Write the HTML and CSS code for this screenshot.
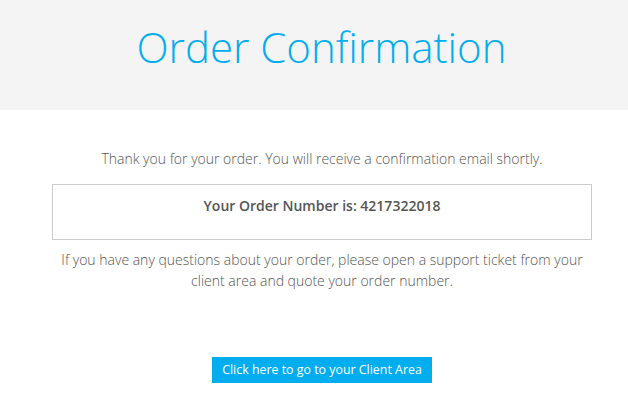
FILE: index.html
```html
<!DOCTYPE html>
<html lang="en">
<head>
    <meta charset="UTF-8">
    <meta name="viewport" content="width=device-width, initial-scale=1.0">
    <title>Order Confirmation</title>
    <link rel="stylesheet" href="styles.css">
</head>
<body>
    <header class="page-header">
        <h1>Order Confirmation</h1>
    </header>
    <main class="content">
        <p class="lead">Thank you for your order. You will receive a confirmation email shortly.</p>
        <div class="order-box">
            <strong>Your Order Number is: 4217322018</strong>
        </div>
        <p class="note">If you have any questions about your order, please open a support ticket from your client area and quote your order number.</p>
        <div class="actions">
            <a href="#" class="btn">Click here to go to your Client Area</a>
        </div>
    </main>
</body>
</html>
```

FILE: styles.css
```css
body {
    margin: 0;
    font-family: "Open Sans", Arial, sans-serif;
    font-weight: 300;
    color: #555;
    background-color: #fff;
}

.page-header {
    background-color: #f4f4f4;
    height: 110px;
    padding-left: 15px;
    display: flex;
    align-items: center;
    justify-content: center;
}

.page-header h1 {
    margin: 0 0 17px;
    font-size: 42px;
    font-weight: 300;
    color: #00aeef;
}

.content {
    padding: 38px 36px 0 52px;
    text-align: center;
    font-size: 14px;
    line-height: 21px;
}

.lead {
    margin: 0 0 15px;
}

.order-box {
    border: 1px solid #ccc;
    padding-top: 10px;
    box-sizing: border-box;
    height: 56px;
}

.order-box strong {
    font-weight: 600;
    color: #555;
}

.note {
    margin: 9px -8px 0;
}

.actions {
    margin-top: 66px;
}

.btn {
    display: inline-block;
    background-color: #00aeef;
    color: #fff;
    text-decoration: none;
    font-size: 12.4px;
    font-weight: 400;
    line-height: 26px;
    padding: 0 10px;
}
```
